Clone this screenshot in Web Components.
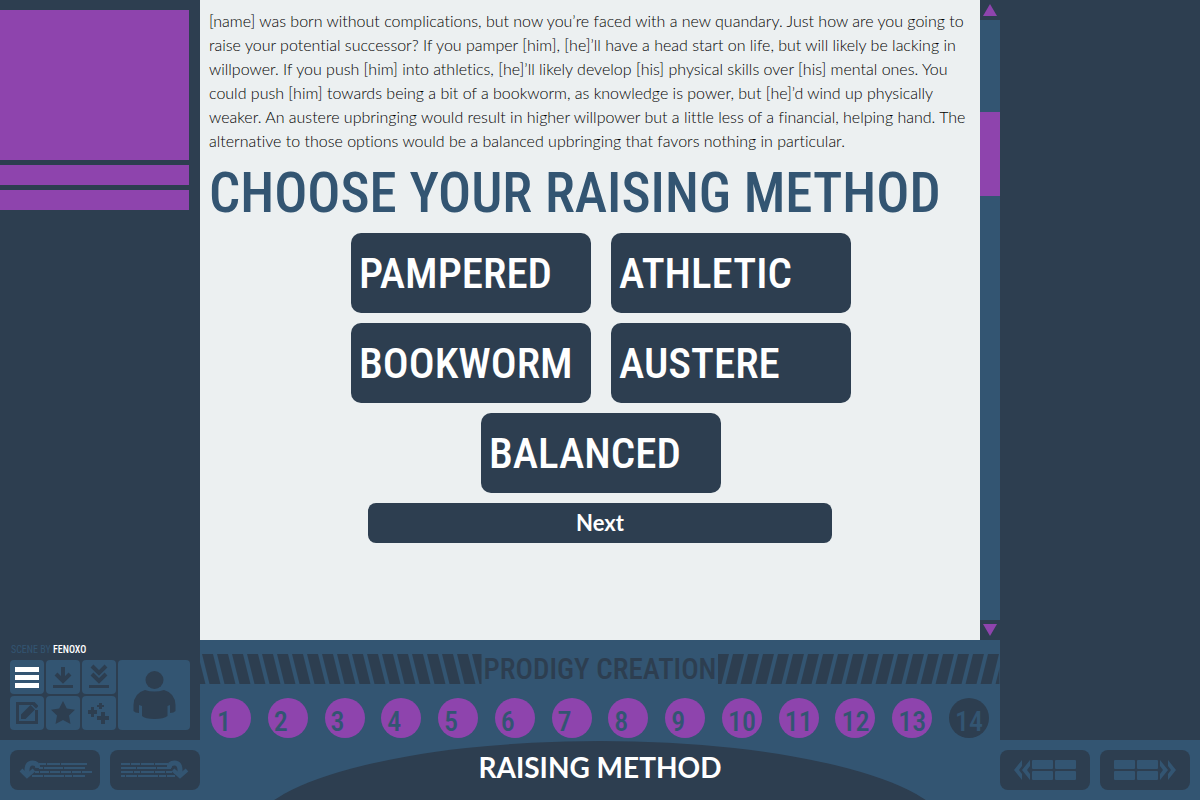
<!DOCTYPE html>
<html lang="en">
<head>
<meta charset="utf-8">
<title>Prodigy Creation</title>
<style>
:root{--dark:#2d3e50;--blue:#335572;--purple:#8e44ad;--paper:#ecf0f1;--narrow:"Roboto Condensed","Liberation Sans Narrow","Liberation Sans",sans-serif;}
body{margin:0;background:var(--dark);font-family:Lato,sans-serif;}
</style>
</head>
<body>
<game-app></game-app>
<script>
const define = (name, html, setup) => customElements.define(name, class extends HTMLElement {
  connectedCallback() {
    if (this.shadowRoot) return;
    this.attachShadow({mode: "open"}).innerHTML = "<style>*{box-sizing:border-box}:host{display:block;box-sizing:border-box}</style>" + html;
    if (setup) setup(this, this.shadowRoot);
  }
});

const icons = {
  menu: '<svg viewBox="0 0 34 34" fill="#fff"><path d="M5 7h24v5H5zM5 15h24v5H5zM5 23h24v5H5z"/></svg>',
  save: '<svg viewBox="0 0 34 34"><path d="M7 25h20v3H7z"/><path d="M17 7v14M10 14l7 7 7-7" fill="none" stroke="currentColor" stroke-width="4"/></svg>',
  load: '<svg viewBox="0 0 34 34"><path d="M7 25h20v3H7z"/><path d="M10 6l7 7 7-7M10 14l7 7 7-7" fill="none" stroke="currentColor" stroke-width="4"/></svg>',
  edit: '<svg viewBox="0 0 34 34"><path d="M23 7.500H7.500v19h19V14" fill="none" stroke="currentColor" stroke-width="3"/><path d="M11 23v-4.500l9.500-9.500 4.500 4.500L15.500 23zM21.500 8l2-2h1l3.500 3.500v1l-2 2z"/></svg>',
  star: '<svg viewBox="0 0 34 34"><path d="M17 5l3.800 7.500 8.200 1.200-6 5.800 1.500 8.500L17 24l-7.500 4L11 19.500l-6-5.800 8.200-1.200z"/></svg>',
  perks: '<svg viewBox="0 0 34 34"><path d="M9 11h3v3h3v4h-3v3H9v-3H6v-4h3zM17 7h3v2h2v2h-2v2h-3v-2h-2V9h2zM19 16h4v4h4v4h-4v4h-4v-4h-4v-4h4z"/></svg>',
  person: '<svg viewBox="0 0 72 70"><circle cx="36.500" cy="20" r="9"/><path d="M27 30Q36 33 46 30Q57 33 57.500 45V51Q56 53 52 53V45L49.500 46V56Q46 59 36.500 59Q27 59 24 56V46L21 45V53Q17 53 15.500 51V45Q16 33 27 30z"/></svg>',
  back: '<svg viewBox="0 0 90 40"><path d="M17 26V20.500q0-7.500 5.500-7.500t5 5" fill="none" stroke="currentColor" stroke-width="5"/><path d="M11 20l6 6 7-6" fill="none" stroke="currentColor" stroke-width="4"/><path d="M29 13h7v2h-7zM37 13h13v2H37zM51 13h26v2H51zM29 17h4v2h-4zM34 17h19v2H34zM54 17h21v2H54zM25 21h4v2h-4zM30 21h9v2h-9zM40 21h10v2H40zM51 21h10v2H51zM62 21h9v2h-9zM72 21h10v2H72zM22 25h11v2H22zM34 25h20v2H34zM55 25h7v2h-7zM63 25h12v2H63z"/></svg>',
  forward: '<svg viewBox="0 0 90 40"><path d="M70 26V20.500q0-7.500-5.500-7.500t-5 5" fill="none" stroke="currentColor" stroke-width="5"/><path d="M63 20l7 6 7-6" fill="none" stroke="currentColor" stroke-width="4"/><path d="M11 13h9v2h-9zM21 13h9v2h-9zM31 13h13v2H31zM45 13h13v2H45zM11 17h15v2H11zM27 17h19v2H27zM47 17h14v2H47zM11 21h12v2H11zM24 21h6v2h-6zM31 21h13v2H31zM45 21h10v2H45zM56 21h6v2h-6zM11 25h4v2h-4zM16 25h11v2H16zM28 25h20v2H28zM49 25h7v2h-7zM57 25h8v2h-8z"/></svg>',
  pagePrev: '<svg viewBox="0 0 90 40"><path d="M22 10v6l-3 4 3 4v6l-8-10zM30 10v6l-3 4 3 4v6l-8-10z"/><rect x="32" y="10" width="21" height="9" rx="1"/><rect x="55" y="10" width="21" height="9" rx="1"/><rect x="32" y="21" width="21" height="9" rx="1"/><rect x="55" y="21" width="21" height="9" rx="1"/></svg>',
  pageNext: '<svg viewBox="0 0 90 40"><path d="M60 10v6l3 4-3 4v6l8-10zM68 10v6l3 4-3 4v6l8-10z"/><rect x="14" y="10" width="21" height="9" rx="1"/><rect x="37" y="10" width="21" height="9" rx="1"/><rect x="14" y="21" width="21" height="9" rx="1"/><rect x="37" y="21" width="21" height="9" rx="1"/></svg>'
};

define("icon-button", `
<style>
button{display:block;width:100%;height:100%;margin:0;padding:0;border:0;border-radius:4px;background:var(--blue);color:var(--dark)}
:host([wide]) button{border-radius:8px;background:var(--dark);color:var(--blue)}
svg{display:block;width:100%;height:100%;fill:currentColor}
svg[fill]{fill:#fff}
</style><button type="button"></button>`, (el, root) => {
  const b = root.querySelector("button");
  b.innerHTML = icons[el.getAttribute("icon")];
  b.setAttribute("aria-label", el.getAttribute("label"));
});

define("choice-button", `
<style>
:host{width:240px}
button{display:block;width:100%;height:80px;margin:0;padding:0 8px;border:0;border-radius:10px;background:var(--dark);color:#fff;font:500 43px/80px var(--narrow);text-align:left}
</style><button type="button"><slot></slot></button>`);

define("next-button", `
<style>
:host{width:464px}
button{display:block;width:100%;height:40px;margin:0;padding:0;border:0;border-radius:8px;background:var(--dark);color:#fff;font:bold 22px/40px Lato,sans-serif}
</style><button type="button"><slot></slot></button>`);

define("side-panel", `
<style>
:host{display:flex;flex-direction:column;padding:10px 0;background:var(--dark)}
.bars{display:grid;gap:5px;margin-right:11px}
.bars div{background:var(--purple);height:20px}
.bars .tall{height:150px}
.credit{margin:auto 11px 0;font:10px/20px var(--narrow);color:var(--blue)}
b{color:#fff;font-weight:500}
nav{display:grid;grid-template-columns:repeat(3,34px) 72px;grid-template-rows:repeat(2,34px);gap:2px;margin-left:10px}
.big{grid-column:4;grid-row:1/3}
</style>
<div class="bars"><div class="tall"></div><div></div><div></div></div>
<div class="credit">SCENE BY <b>FENOXO</b></div>
<nav>
<icon-button icon="menu" label="Menu"></icon-button>
<icon-button icon="save" label="Save"></icon-button>
<icon-button icon="load" label="Quick save"></icon-button>
<icon-button class="big" icon="person" label="Appearance"></icon-button>
<icon-button icon="edit" label="Edit"></icon-button>
<icon-button icon="star" label="Favorite"></icon-button>
<icon-button icon="perks" label="Perks"></icon-button>
</nav>`);

define("scroll-rail", `
<style>
:host{display:grid;grid-template-rows:20px 1fr 20px;background:var(--dark)}
svg{display:block;width:20px;height:20px;fill:var(--purple)}
.track{background:var(--blue);padding-top:92px}
.thumb{height:84px;background:var(--purple)}
</style>
<svg viewBox="0 0 20 20"><path d="M10 4l7 12H3z"/></svg>
<div class="track"><div class="thumb"></div></div>
<svg viewBox="0 0 20 20"><path d="M3 4h14l-7 12z"/></svg>`);

define("story-view", `
<style>
:host{background:var(--paper);padding-top:9px}
p{margin:0;padding:0 9px;font:300 16px/24px Lato,sans-serif;font-variant-ligatures:none;color:#000}
h1{margin:0;padding-left:9px;font:500 55px/80px var(--narrow);color:var(--blue);white-space:nowrap}
.actions{display:grid;justify-items:center;gap:10px;padding-left:20px}
.choices{display:flex;flex-wrap:wrap;justify-content:center;gap:10px 20px;max-width:502px;padding-left:2px}
</style>
<p><slot></slot></p>
<h1>CHOOSE YOUR RAISING METHOD</h1>
<div class="actions">
<div class="choices">
<choice-button>PAMPERED</choice-button><choice-button>ATHLETIC</choice-button>
<choice-button>BOOKWORM</choice-button><choice-button>AUSTERE</choice-button>
<choice-button>BALANCED</choice-button>
</div>
<next-button>Next</next-button>
</div>`);

define("hazard-stripes", `
<style>
:host{flex:1;height:30px}
svg{display:block;width:100%;height:100%}
rect.bar{fill:var(--dark)}
</style>
<svg><defs><pattern id="p" width="15" height="30" patternUnits="userSpaceOnUse"><rect class="bar" width="11" height="30"/></pattern></defs><rect width="100%" height="30" fill="url(#p)"/></svg>`,
(el, root) => {
  const mirror = el.hasAttribute("mirror");
  root.querySelector("pattern").setAttribute("patternTransform", mirror ? "skewX(-14)" : "translate(2) skewX(14)");
});

define("step-dot", `
<style>
:host{width:40px;height:40px;border-radius:50%;background:var(--purple);color:var(--blue);font:500 28px/28px var(--narrow);padding:10px 0 0 6px}
:host([pending]){background:var(--dark)}
</style><slot></slot>`);

define("creation-progress", `
<style>
:host{background:var(--blue);padding-top:14px}
.title{display:flex;align-items:center;height:30px}
h2{margin:0;padding:0 2px;font:500 29px/30px var(--narrow);color:var(--dark)}
.steps{display:flex;justify-content:space-between;padding:14px 11px 2px}
</style>
<div class="title"><hazard-stripes></hazard-stripes><h2>PRODIGY CREATION</h2><hazard-stripes mirror></hazard-stripes></div>
<div class="steps"></div>`, (el, root) => {
  root.querySelector(".steps").innerHTML = Array.from({length: 14}, (_, i) =>
    `<step-dot${i === 13 ? " pending" : ""}>${i + 1}</step-dot>`).join("");
});

define("bottom-bar", `
<style>
:host{display:grid;grid-template-columns:200px 1fr 200px;height:60px;background:var(--blue)}
.pair{display:grid;grid-template-columns:90px 90px;gap:10px;padding:10px 0 10px 10px}
.pair.right{padding-left:0}
.mid{display:grid;overflow:hidden}
.mid>*{grid-area:1/1}
svg{display:block;margin:0 auto;width:700px;height:60px;fill:var(--dark)}
h2{margin:0;text-align:center;color:#fff;font:bold 28px/54px Lato,sans-serif}
</style>
<div class="pair"><icon-button wide icon="back" label="Back"></icon-button><icon-button wide icon="forward" label="Forward"></icon-button></div>
<div class="mid"><svg viewBox="0 0 700 60"><ellipse cx="350" cy="94" rx="350" ry="93"/></svg><h2>RAISING METHOD</h2></div>
<div class="pair right"><icon-button wide icon="pagePrev" label="Previous page"></icon-button><icon-button wide icon="pageNext" label="Next page"></icon-button></div>`);

define("game-app", `
<style>
:host{display:grid;grid-template-columns:200px minmax(0,1fr) 200px;grid-template-rows:1fr auto;min-height:100vh}
main{display:grid;grid-template-columns:minmax(0,1fr) 20px;grid-template-rows:1fr 100px}
creation-progress,bottom-bar{grid-column:1/-1}
</style>
<side-panel></side-panel>
<main>
<story-view>[name] was born without complications, but now you’re faced with a new quandary. Just how are you going to raise your potential successor? If you pamper [him], [he]’ll have a head start on life, but will likely be lacking in willpower. If you push [him] into athletics, [he]’ll likely develop [his] physical skills over [his] mental ones. You could push [him] towards being a bit of a bookworm, as knowledge is power, but [he]’d wind up physically weaker. An austere upbringing would result in higher willpower but a little less of a financial, helping hand. The alternative to those options would be a balanced upbringing that favors nothing in particular.</story-view>
<scroll-rail></scroll-rail>
<creation-progress></creation-progress>
</main>
<div></div>
<bottom-bar></bottom-bar>`);
</script>
</body>
</html>
